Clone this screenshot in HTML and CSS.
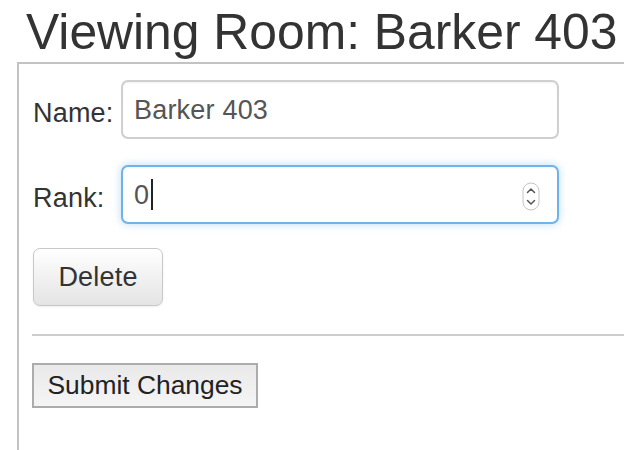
FILE: index.html
```html
<!DOCTYPE html>
<html>
<head>
<meta charset="utf-8">
<link rel="stylesheet" href="styles.css">
</head>
<body>
<h1 class="title">Viewing Room: Barker 403</h1>
<div class="panel">
  <div class="form-grid">
    <label class="label">Name:</label>
    <div class="field"><span class="value">Barker 403</span></div>
    <label class="label">Rank:</label>
    <div class="field focused">
      <span class="value">0</span><span class="caret"></span>
      <svg class="spinner" width="18" height="29" viewBox="0 0 18 29">
        <rect x="1" y="1" width="16" height="27" rx="8" ry="8" fill="#fff" stroke="#c4c4c4" stroke-width="1"/>
        <path d="M5.5 10.5 L9 7 L12.5 10.5" fill="none" stroke="#555" stroke-width="1.5" stroke-linecap="round" stroke-linejoin="round"/>
        <path d="M5.5 18.5 L9 22 L12.5 18.5" fill="none" stroke="#555" stroke-width="1.5" stroke-linecap="round" stroke-linejoin="round"/>
      </svg>
    </div>
  </div>
  <button class="btn-delete" type="button">Delete</button>
  <hr class="divider">
  <button class="btn-submit" type="button">Submit Changes</button>
</div>
</body>
</html>
```
FILE: styles.css
```css
html, body {
  margin: 0;
  padding: 0;
  background: #fff;
  overflow: hidden;
  width: 624px;
  height: 450px;
}
body {
  font-family: "Liberation Sans", Arial, Helvetica, sans-serif;
  color: #333;
}
.title {
  margin: 0 0 2px 0;
  padding: 4px 0 0 26px;
  font-size: 49.8px;
  line-height: 56px;
  font-weight: normal;
  color: #333;
  white-space: nowrap;
}
.panel {
  margin-left: 17px;
  width: 700px;
  height: 400px;
  border-top: 2px solid #c3c3c3;
  border-left: 2px solid #c3c3c3;
  padding: 16px 0 0 14px;
  box-sizing: border-box;
}
.form-grid {
  display: grid;
  grid-template-columns: 88px 438px;
  row-gap: 26px;
}
.label {
  font-size: 27px;
  letter-spacing: 0.2px;
  line-height: 30px;
  padding-top: 18px;
  color: #333;
}
.field {
  position: relative;
  height: 59px;
  box-sizing: border-box;
  border: 2px solid #cfcfcf;
  border-radius: 7px;
  padding: 0 11px;
  display: flex;
  align-items: center;
  font-size: 27px;
  letter-spacing: 0.2px;
  line-height: 30px;
  color: #555;
  background: #fff;
  box-shadow: inset 0 1px 2px rgba(0,0,0,0.06);
}
.field.focused {
  border-color: #6db3ec;
  box-shadow: inset 0 1px 2px rgba(0,0,0,0.05), 0 0 9px rgba(102,175,233,0.45);
}
.caret {
  display: inline-block;
  width: 2px;
  height: 31px;
  background: #222;
  margin-left: 2px;
}
.spinner {
  position: absolute;
  right: 17px;
  top: 15px;
}
.btn-delete {
  margin: 24px 0 0 0;
  width: 130px;
  height: 58px;
  font-family: inherit;
  font-size: 27px;
  letter-spacing: 0.2px;
  color: #333;
  border: 1.5px solid #c8c8c8;
  border-radius: 7px;
  background: linear-gradient(#ffffff, #e4e4e4);
  box-shadow: 0 1px 2px rgba(0,0,0,0.08);
  padding: 0;
  display: block;
}
.divider {
  margin: 28px 0 0 -1px;
  border: 0;
  border-top: 2px solid #cdcdcd;
  height: 0;
}
.btn-submit {
  margin: 27px 0 0 -1px;
  display: block;
  width: 226px;
  height: 45px;
  font-family: inherit;
  font-size: 26.4px;
  color: #222;
  border: 2px solid #acacac;
  border-radius: 0;
  background: linear-gradient(#e9e9e9, #f5f5f5);
  padding: 0;
}
```
